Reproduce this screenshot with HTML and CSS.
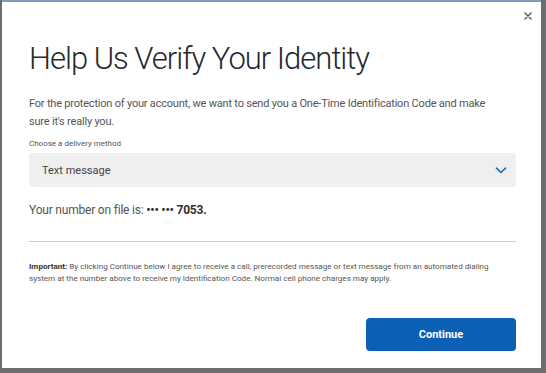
FILE: index.html
```html
<!DOCTYPE html>
<html>
<head>
    <title>Help Us Verify Your Identity</title>
    <link rel="stylesheet" href="styles.css">
</head>
<body>
    <div class="modal">
        <button class="close-btn" aria-label="Close">
            <svg width="8" height="8" viewBox="0 0 8 8">
                <path d="M1 1 L7 7 M7 1 L1 7" stroke="#555" stroke-width="1.4" stroke-linecap="round"/>
            </svg>
        </button>
        <h1>Help Us Verify Your Identity</h1>
        <p class="intro">For the protection of your account, we want to send you a One-Time Identification Code and make sure it's really you.</p>

        <label class="field-label" for="delivery">Choose a delivery method</label>
        <div class="select-wrap">
            <select id="delivery">
                <option>Text message</option>
                <option>Voice call</option>
            </select>
            <svg class="chevron" width="12" height="7" viewBox="0 0 12 7">
                <path d="M1.5 1.2 L6 5.5 L10.5 1.2" fill="none" stroke="#2c6fb9" stroke-width="1.7" stroke-linecap="round" stroke-linejoin="round"/>
            </svg>
        </div>

        <p class="number">Your number on file is: <strong>&bull;&bull;&bull; &bull;&bull;&bull; 7053.</strong></p>

        <hr class="divider">

        <p class="fine-print"><strong>Important:</strong> By clicking Continue below I agree to receive a call, prerecorded message or text message from an automated dialing system at the number above to receive my Identification Code. Normal cell phone charges may apply.</p>

        <div class="actions">
            <button class="continue-btn">Continue</button>
        </div>
    </div>
</body>
</html>
```

FILE: styles.css
```css
html, body {
    margin: 0;
    height: 100%;
}
body {
    font-family: Roboto, 'Liberation Sans', sans-serif;
    background: #6e6e6e;
    padding: 0 5px 5px 2px;
    box-sizing: border-box;
}
.modal {
    position: relative;
    background: white;
    height: 100%;
    box-sizing: border-box;
    border-top: 2px solid #7d9bbd;
    padding: 0 25px 0 27px;
}
.close-btn {
    position: absolute;
    top: 10px;
    right: 9px;
    border: none;
    background: none;
    padding: 0;
    line-height: 0;
    cursor: pointer;
}
h1 {
    font-weight: 300;
    font-size: 31px;
    letter-spacing: -1px;
    color: #26292d;
    margin: 0;
    padding-top: 37px;
    line-height: 40px;
}
.intro {
    max-width: 460px;
    font-size: 11px;
    letter-spacing: -0.2px;
    line-height: 18px;
    color: #555;
    margin: 16px 0 0;
}
.field-label {
    display: block;
    font-size: 8px;
    line-height: 10px;
    color: #555;
    margin-top: 8px;
}
.select-wrap {
    position: relative;
    margin-top: 4px;
}
select {
    display: block;
    width: 100%;
    height: 34px;
    border: none;
    border-radius: 4px;
    background: #efefef;
    appearance: none;
    font-family: inherit;
    font-size: 11px;
    color: #444;
    padding: 0 13px;
}
.chevron {
    position: absolute;
    right: 9px;
    top: 14px;
}
.number {
    font-size: 12px;
    letter-spacing: -0.2px;
    line-height: 18px;
    color: #555;
    margin: 14px 0 0;
}
.number strong {
    color: #333;
}
.divider {
    border: none;
    border-top: 1px solid #ccc;
    margin: 22px 0 0;
}
.fine-print {
    max-width: 460px;
    font-size: 8.1px;
    line-height: 12px;
    color: #555;
    margin: 18px 0 0;
}
.fine-print strong {
    color: #333;
}
.actions {
    display: flex;
    justify-content: flex-end;
    margin-top: 34px;
}
.continue-btn {
    width: 150px;
    height: 33px;
    border: none;
    border-radius: 4px;
    background: #0b5fb5;
    color: white;
    font-family: inherit;
    font-weight: 700;
    font-size: 11px;
    cursor: pointer;
}
```
